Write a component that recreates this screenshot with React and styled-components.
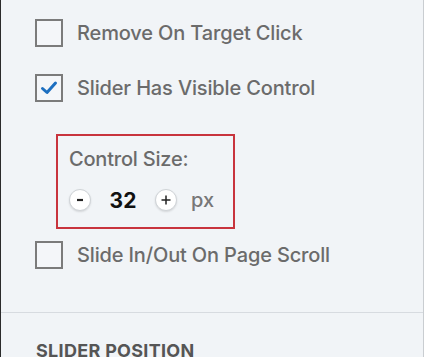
import React from "react";
import styled, { createGlobalStyle } from "styled-components";

const GlobalStyle = createGlobalStyle`
  html, body {
    margin: 0;
    padding: 0;
    background: #ffffff;
  }
  body {
    font-family: "Inter", "Liberation Sans", Arial, sans-serif;
  }
`;

const Panel = styled.div`
  width: 424px;
  height: 357px;
  overflow: hidden;
  background: #f1f4f7;
  border-left: 1px solid #2b2b2b;
  border-right: 1px solid #c9cdd1;
  box-sizing: border-box;
  display: flex;
  flex-direction: column;
`;

const Options = styled.div`
  display: flex;
  flex-direction: column;
  padding: 19px 0 0 34px;
`;

const Option = styled.label`
  display: flex;
  align-items: center;
  gap: 14px;
  height: 28px;
  margin-top: ${(p) => p.$top || 0}px;
  color: #6b6b6b;
  font-size: 20px;
  font-weight: 500;
  letter-spacing: -0.15px;
`;

const Box = styled.span`
  width: 28px;
  height: 28px;
  box-sizing: border-box;
  border: 2px solid #7b7b7b;
  background: #f4f6f9;
  display: flex;
  align-items: center;
  justify-content: center;
  flex-shrink: 0;
`;

const SizeBox = styled.div`
  margin: 32px 0 0 21px;
  width: 179px;
  height: 95px;
  box-sizing: border-box;
  border: 2px solid #c8343d;
  padding: 12px 0 0 11px;
  display: flex;
  flex-direction: column;
  gap: 17px;
`;

const SizeLabel = styled.div`
  color: #6b6b6b;
  font-size: 20px;
  font-weight: 500;
  letter-spacing: -0.2px;
  line-height: 23px;
`;

const Stepper = styled.div`
  display: flex;
  align-items: center;
  height: 24px;
`;

const RoundButton = styled.button`
  width: 22px;
  height: 22px;
  padding: 0;
  border-radius: 50%;
  border: 1px solid #cfd3d7;
  background: #ffffff;
  box-shadow: 0 1px 2px rgba(0, 0, 0, 0.12);
  display: flex;
  align-items: center;
  justify-content: center;
  flex-shrink: 0;
`;

const Value = styled.span`
  width: 64px;
  text-align: center;
  font-size: 21px;
  font-weight: 700;
  color: #111111;
`;

const Unit = styled.span`
  margin-left: 14px;
  font-size: 20px;
  font-weight: 500;
  color: #777777;
`;

const Divider = styled.hr`
  margin: 43px 0 0;
  border: 0;
  border-top: 1px solid #d7dbe0;
`;

const Heading = styled.div`
  padding: 27px 0 0 35px;
  font-size: 18px;
  font-weight: 700;
  color: #555555;
  letter-spacing: 0.3px;
  text-transform: uppercase;
`;

const Check = () => (
  <svg width="18" height="16" viewBox="0 0 18 16">
    <path
      d="M2.5 8.5 L7 12.5 L15.5 3"
      fill="none"
      stroke="#1d6fc0"
      strokeWidth="3"
      strokeLinecap="round"
      strokeLinejoin="round"
    />
  </svg>
);

const Minus = () => (
  <svg width="10" height="10" viewBox="0 0 10 10">
    <path d="M2 5 H8" stroke="#222" strokeWidth="2.2" />
  </svg>
);

const Plus = () => (
  <svg width="12" height="12" viewBox="0 0 12 12">
    <path d="M1.5 6 H10.5 M6 1.5 V10.5" stroke="#222" strokeWidth="1.5" />
  </svg>
);

export default function App() {
  return (
    <>
      <GlobalStyle />
      <Panel>
        <Options>
          <Option>
            <Box />
            Remove On Target Click
          </Option>
          <Option $top={27}>
            <Box>
              <Check />
            </Box>
            Slider Has Visible Control
          </Option>
          <SizeBox>
            <SizeLabel>Control Size:</SizeLabel>
            <Stepper>
              <RoundButton aria-label="decrease">
                <Minus />
              </RoundButton>
              <Value>32</Value>
              <RoundButton aria-label="increase">
                <Plus />
              </RoundButton>
              <Unit>px</Unit>
            </Stepper>
          </SizeBox>
          <Option $top={12}>
            <Box />
            Slide In/Out On Page Scroll
          </Option>
        </Options>
        <Divider />
        <Heading>Slider Position</Heading>
      </Panel>
    </>
  );
}
